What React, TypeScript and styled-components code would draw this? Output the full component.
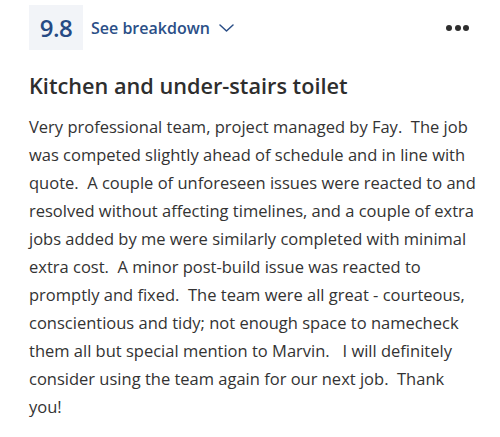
import React from "react";
import styled, { createGlobalStyle } from "styled-components";

const Global = createGlobalStyle`
  html, body { margin: 0; padding: 0; background: #fff; }
  body { font-family: "Open Sans", "Noto Sans", sans-serif; }
`;

const Page = styled.div`
  padding: 5px 0 0 29px;
  width: 500px;
  box-sizing: border-box;
`;

const Header = styled.div`
  display: flex;
  align-items: center;
  height: 45px;
  margin-right: 28px;
`;

const Score = styled.div`
  width: 54px;
  height: 45px;
  background: #f2f4f8;
  color: #264a85;
  font-size: 24px;
  font-weight: 600;
  display: flex;
  align-items: center;
  justify-content: center;
  letter-spacing: -0.5px;
`;

const Breakdown = styled.button`
  margin-left: 8px;
  border: 0;
  background: none;
  padding: 0;
  display: flex;
  align-items: center;
  gap: 9px;
  font-family: inherit;
  font-size: 16px;
  font-weight: 600;
  color: #2b4f87;
  cursor: pointer;
`;

const More = styled.button`
  margin-left: auto;
  margin-right: 3px;
  border: 0;
  background: none;
  padding: 0;
  display: flex;
  gap: 2.5px;
  cursor: pointer;
`;

const Dot = styled.span`
  width: 6px;
  height: 6px;
  border-radius: 50%;
  background: #2e2e2e;
`;

const Title = styled.h2`
  margin: 21px 0 0 0;
  font-size: 21.7px;
  font-weight: 600;
  color: #2e2e2e;
  line-height: 30px;
`;

const Body = styled.p`
  margin: 12px 0 0 0;
  max-width: 451px;
  font-size: 16.5px;
  line-height: 28px;
  color: #333;
  white-space: pre-wrap;
`;

export default function App() {
  return (
    <>
      <Global />
      <Page>
        <Header>
          <Score>9.8</Score>
          <Breakdown>
            See breakdown
            <svg width="15" height="8" viewBox="0 0 15 8" fill="none">
              <path d="M1 1l6.5 6 6.5-6" stroke="#2b4f87" strokeWidth="1.5" strokeLinecap="round" strokeLinejoin="round" />
            </svg>
          </Breakdown>
          <More aria-label="More">
            <Dot />
            <Dot />
            <Dot />
          </More>
        </Header>
        <Title>Kitchen and under-stairs toilet</Title>
        <Body>
          {"Very professional team, project managed by Fay.  The job was competed slightly ahead of schedule and in line with quote.  A couple of unforeseen issues were reacted to and resolved without affecting timelines, and a couple of extra jobs added by me were similarly completed with minimal extra cost.  A minor post-build issue was reacted to promptly and fixed.  The team were all great - courteous, conscientious and tidy; not enough space to namecheck them all but special mention to Marvin.   I will definitely consider using the team again for our next job.  Thank you!"}
        </Body>
      </Page>
    </>
  );
}
